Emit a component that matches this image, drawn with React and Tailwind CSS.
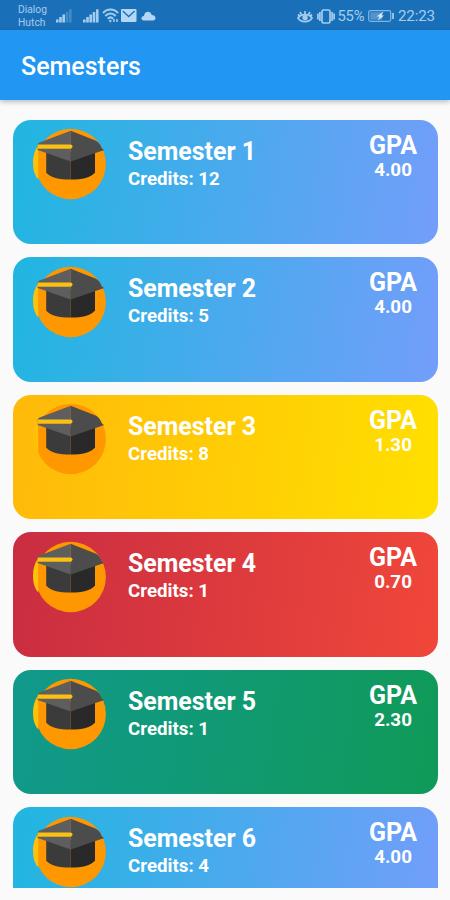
const BLUE = 'bg-[linear-gradient(98deg,#20b6e0_0%,#739efa_100%)]';
const YELLOW = 'bg-[linear-gradient(98deg,#ffb90a_0%,#ffe000_100%)]';
const RED = 'bg-[linear-gradient(98deg,#c92d41_0%,#f0473a_100%)]';
const GREEN = 'bg-[linear-gradient(98deg,#11998c_0%,#109a58_100%)]';

const semesters = [
  { id: 1, credits: 12, gpa: '4.00', tone: BLUE },
  { id: 2, credits: 5, gpa: '4.00', tone: BLUE },
  { id: 3, credits: 8, gpa: '1.30', tone: YELLOW },
  { id: 4, credits: 1, gpa: '0.70', tone: RED },
  { id: 5, credits: 1, gpa: '2.30', tone: GREEN },
  { id: 6, credits: 4, gpa: '4.00', tone: BLUE },
];

function GraduationCap() {
  return (
    <svg viewBox="0 0 80 80" className="ml-[17px] mt-[5.5px] h-20 w-20 shrink-0">
      <circle cx="40.7" cy="39" r="35.2" fill="#ff9800" />
      <path d="M8.2 20 V54.5 C4.2 50 3 44 3 37 C3 31 4.6 25 8.2 20Z" fill="#ffc107" />
      <path d="M16.2 27 H40.7 V54.6 C29 54.6 20 52.5 16.2 47.5Z" fill="#3b3b3b" />
      <path d="M40.7 27 H65 V47.5 C61 52.5 52 54.6 40.7 54.6Z" fill="#292929" />
      <path d="M40.7 5.7 L9 17.8 L7.7 19.6 V25 L40.7 36.6Z" fill="#5e5e5e" />
      <path d="M40.7 5.7 L65.5 15.5 C68.5 17 70 19 71 21.5 C71.7 23.2 72.8 24.4 74.2 24.9 L40.7 36.6Z" fill="#4c4c4c" />
      <path d="M7.7 19.5 H40.4 a2.1 2.1 0 0 1 0 4.2 H7.7Z" fill="#fbc012" />
    </svg>
  );
}

function SemesterCard({ id, credits, gpa, tone }) {
  return (
    <article className={`flex h-[124.5px] shrink-0 rounded-[18px] font-bold text-white ${tone}`}>
      <GraduationCap />
      <div className="ml-[18px] flex-1 pt-[18.3px]">
        <h2 className="text-[24.9px] leading-[28px]">Semester {id}</h2>
        <p className="text-[18.7px] leading-[26px]">Credits: {credits}</p>
      </div>
      <div className="mr-[21px] pt-[12.2px] text-center">
        <p className="text-[25px] leading-[28px]">GPA</p>
        <p className="text-[18.8px] leading-[20px]">{gpa}</p>
      </div>
    </article>
  );
}

function Signal({ faint }) {
  return (
    <svg viewBox="0 0 16 14" className="h-3.5 w-4 shrink-0" fill="#a3cdef">
      <rect x="0" y="10.5" width="2.6" height="3" />
      <rect x="3.2" y="8" width="2.6" height="5.5" />
      <rect x="6.4" y="5.5" width="2.6" height="8" />
      <rect x="9.7" y="3" width="2.6" height="10.5" opacity={faint ? 0.3 : 1} />
      <rect x="13" y="0.3" width="2.6" height="13.2" opacity={faint ? 0.3 : 1} />
    </svg>
  );
}

function StatusBar() {
  return (
    <div className="flex h-[30px] shrink-0 items-center bg-[#1a70b8] pl-[18px] pr-[15px] text-[#a3cdef]">
      <div className="w-[38px] pt-0.5 text-[10.3px] leading-[13.5px]">
        <div>Dialog</div>
        <div>Hutch</div>
      </div>
      <div className="flex flex-1 items-center pt-px">
        <div className="mr-[11px] flex h-[14px] w-4"><Signal faint /></div>
        <Signal />
        <svg viewBox="0 0 18 15" className="ml-[3px] h-[15px] w-[18px]" fill="none" stroke="#a3cdef" strokeWidth="2">
          <path d="M1 5 C5 0.3 12 0.3 16 5" />
          <path d="M3.3 8 C6.5 4.6 10.5 4.6 13.7 8" />
          <path d="M5.8 10.7 C7.5 9 9.5 9 11.2 10.7" />
          <circle cx="8.3" cy="13" r="1.2" fill="#a3cdef" stroke="none" />
          <path d="M12 14 V11 M15 11 V14" strokeWidth="1.5" />
        </svg>
        <svg viewBox="0 0 16 13" className="ml-[1px] h-[13px] w-4">
          <rect width="15.5" height="13" rx="1" fill="#b3d7f4" />
          <path d="M1.8 2 L7.7 7.5 L13.7 2" fill="none" stroke="#1a70b8" strokeWidth="1.3" />
        </svg>
        <svg viewBox="0 0 15 10" className="ml-1 h-2.5 w-[15px]" fill="#b3d7f4">
          <path d="M3 9.5 C-0.5 9.5 -0.3 5 3 5 C3.5 0 9.5 -0.7 10.7 4 C15.5 4 15.5 9.5 12 9.5Z" />
        </svg>
      </div>
      <div className="flex items-center pt-[2px] text-[14.8px] leading-[18px] tracking-[-0.2px]">
        <svg viewBox="0 0 16 13" className="mr-[4px] h-[13px] w-4" fill="none" stroke="#a3cdef" strokeWidth="1.7">
          <path d="M1 8 C4 3.5 12 3.5 15 8 C12 12.8 4 12.8 1 8Z" />
          <circle cx="8" cy="7.7" r="1.8" fill="#a3cdef" />
          <path d="M8 1 V4 M3 2 L4.5 4.5 M13 2 L11.5 4.5 M1 4.5 L2.7 6 M15 4.5 L13.3 6" />
        </svg>
        <svg viewBox="0 0 18 15" className="mr-[2.5px] h-[15px] w-[18px]" fill="none" stroke="#a3cdef" strokeWidth="1.7">
          <rect x="5" y="1" width="8" height="13" rx="1.5" />
          <path d="M2.9 3 V12 M15.1 3 V12 M0.9 4.5 V10.5 M17.1 4.5 V10.5" />
        </svg>
        <span className="w-[27.5px] whitespace-nowrap">55%</span>
        <svg viewBox="0 0 26 12" className="ml-[3px] h-3 w-[26px]" fill="none" stroke="#a3cdef" strokeWidth="1.2">
          <rect x="0.7" y="0.7" width="22" height="10.6" rx="1.8" opacity="0.75" />
          <path d="M25 3 V9" strokeWidth="1.7" />
          <rect x="2.3" y="2.3" width="12" height="7.4" fill="#a3cdef" opacity="0.4" stroke="none" />
          <path d="M15.5 1.5 L8.5 6.5 H11.5 L10 10.5 L16 5.5 H13.5Z" fill="#d7ecfc" stroke="none" />
        </svg>
        <span className="ml-[4px] w-[37px] whitespace-nowrap text-[15.2px]">22:23</span>
      </div>
    </div>
  );
}

export default function App() {
  return (
    <div className="flex h-[900px] w-[450px] flex-col overflow-hidden bg-[#fafafa] font-[Roboto,sans-serif]">
      <StatusBar />
      <header className="z-10 flex h-[70px] shrink-0 items-center bg-[#2196f3] pl-[21px] pt-[4px] shadow-[0_2px_5px_rgba(0,0,0,0.25)]">
        <h1 className="text-[25px] font-medium leading-[30px] text-white">Semesters</h1>
      </header>
      <main className="flex h-[788px] shrink-0 flex-col gap-[13px] overflow-hidden pl-[13px] pr-[12px] pt-[19.5px]">
        {semesters.map((s) => (
          <SemesterCard key={s.id} {...s} />
        ))}
      </main>
    </div>
  );
}
